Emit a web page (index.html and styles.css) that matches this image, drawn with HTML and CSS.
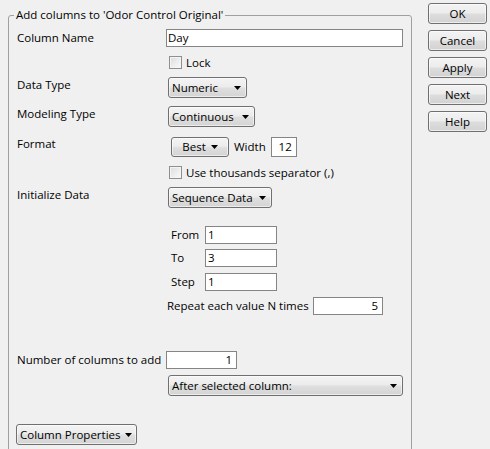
FILE: index.html
```html
<!DOCTYPE html>
<html>
<head>
<meta charset="utf-8">
<link rel="stylesheet" href="styles.css">
</head>
<body>
<div class="dialog">
  <fieldset class="group">
    <legend class="group-title">Add columns to 'Odor Control Original'</legend>

    <div class="row h18 r-name">
      <span class="lbl">Column Name</span>
      <span class="field w-name">Day</span>
    </div>

    <div class="row h13 r-lock">
      <span class="lbl"></span>
      <span class="check"></span><span class="check-text">Lock</span>
    </div>

    <div class="row h21 r-type">
      <span class="lbl up">Data Type</span>
      <span class="combo w-numeric"><span>Numeric</span><svg class="arrow" width="7" height="4" viewBox="0 0 7 4"><polygon points="0,0 7,0 3.5,4"/></svg></span>
    </div>

    <div class="row h21 r-model">
      <span class="lbl up">Modeling Type</span>
      <span class="combo w-cont"><span>Continuous</span><svg class="arrow" width="7" height="4" viewBox="0 0 7 4"><polygon points="0,0 7,0 3.5,4"/></svg></span>
    </div>

    <div class="row h20 r-format">
      <span class="lbl up">Format</span>
      <span class="menu-btn w-best"><span>Best</span><svg class="arrow" width="7" height="4" viewBox="0 0 7 4"><polygon points="0,0 7,0 3.5,4"/></svg></span>
      <span class="inline-lbl">Width</span>
      <span class="field right w-width">12</span>
    </div>

    <div class="row h13 r-sep">
      <span class="lbl"></span>
      <span class="check"></span><span class="check-text">Use thousands separator (,)</span>
    </div>

    <div class="row h21 r-init">
      <span class="lbl up">Initialize Data</span>
      <span class="combo w-seq"><span>Sequence Data</span><svg class="arrow" width="7" height="4" viewBox="0 0 7 4"><polygon points="0,0 7,0 3.5,4"/></svg></span>
    </div>

    <div class="seq">
      <div class="row h18 r-from">
        <span class="seq-lbl">From</span>
        <span class="field w-seqval">1</span>
      </div>
      <div class="row h18 r-to">
        <span class="seq-lbl">To</span>
        <span class="field w-seqval">3</span>
      </div>
      <div class="row h18 r-step">
        <span class="seq-lbl">Step</span>
        <span class="field w-seqval">1</span>
      </div>
      <div class="row h18 r-repeat">
        <span class="repeat-lbl">Repeat each value N times</span>
        <span class="field right w-repeat">5</span>
      </div>
    </div>

    <div class="row h18 r-count">
      <span class="lbl">Number of columns to add</span>
      <span class="field right w-count">1</span>
    </div>

    <div class="row h21 r-after">
      <span class="lbl"></span>
      <span class="combo w-after"><span>After selected column:</span><svg class="arrow" width="7" height="4" viewBox="0 0 7 4"><polygon points="0,0 7,0 3.5,4"/></svg></span>
    </div>

    <div class="row h21 r-props">
      <span class="menu-btn w-props"><span>Column Properties</span><svg class="arrow" width="7" height="4" viewBox="0 0 7 4"><polygon points="0,0 7,0 3.5,4"/></svg></span>
    </div>
  </fieldset>

  <div class="actions">
    <button class="btn">OK</button>
    <button class="btn">Cancel</button>
    <button class="btn">Apply</button>
    <button class="btn">Next</button>
    <button class="btn">Help</button>
  </div>
</div>
</body>
</html>
```

FILE: styles.css
```css
html, body {
  margin: 0;
  padding: 0;
  height: 100%;
  overflow: hidden;
  background: #f0f0f0;
}

body {
  font-family: "Open Sans", "Noto Sans", sans-serif;
  font-size: 11.5px;
  color: #000;
}

.dialog {
  display: flex;
  align-items: flex-start;
  padding-left: 8px;
  gap: 16px;
}

/* group box */
.group {
  box-sizing: border-box;
  width: 404px;
  margin: 7px 0 0 0;
  padding: 0 8px 12px 8px;
  border: 1px solid #a0a0a0;
  border-radius: 3px;
  min-inline-size: 0;
}

.group-title {
  padding: 0 2px;
  margin-left: -3px;
  line-height: 16px;
  height: 16px;
}

/* rows */
.row {
  display: flex;
  align-items: center;
  line-height: 14px;
  white-space: nowrap;
}
.h13 { height: 13px; }
.h18 { height: 18px; }
.h20 { height: 20px; }
.h21 { height: 21px; }

.r-name   { margin-top: 6px; }
.r-lock   { margin-top: 9px; }
.r-type   { margin-top: 8px; }
.r-model  { margin-top: 8px; }
.r-format { margin-top: 10px; }
.r-sep    { margin-top: 9px; }
.r-init   { margin-top: 8px; }
.r-from   { margin-top: 18px; }
.r-to     { margin-top: 5px; }
.r-step   { margin-top: 6px; }
.r-repeat { margin-top: 6px; }
.r-count  { margin-top: 36px; }
.r-after  { margin-top: 6px; }
.r-props  { margin-top: 28px; }

.lbl {
  flex: none;
  width: 149px;
}
.lbl.up { margin-bottom: 6px; }

/* text fields */
.field {
  box-sizing: border-box;
  display: flex;
  align-items: center;
  height: 18px;
  padding: 0 2px 0 1px;
  background: #fff;
  border: 1px solid #858585;
  color: #000;
}
.field.right {
  justify-content: flex-end;
  padding-right: 4px;
}
.w-name   { width: 238px; }
.w-width  { width: 26px; height: 20px; }
.w-seqval { width: 72px; padding-left: 2px; }
.w-repeat { width: 70px; }
.w-count  { width: 71px; padding-right: 6px; }

/* checkbox */
.check {
  box-sizing: border-box;
  flex: none;
  width: 13px;
  height: 13px;
  margin-left: 3px;
  border: 1px solid #8e8f8f;
  background: linear-gradient(135deg, #dcdcdc, #fbfbfb);
  box-shadow: inset 0 0 0 1px #f4f4f4;
}
.check-text {
  margin-left: 4px;
}

/* combo boxes and menu buttons */
.combo, .menu-btn {
  box-sizing: border-box;
  display: flex;
  align-items: center;
  height: 21px;
  border: 1px solid #707070;
  border-radius: 3px;
  background: linear-gradient(#f4f4f4 0%, #ececec 45%, #dedede 55%, #d4d4d4 100%);
  box-shadow: inset 0 0 0 1px rgba(255, 255, 255, 0.55);
}
.combo {
  justify-content: space-between;
  margin-left: 2px;
  padding: 0 5px 0 3px;
}
.arrow {
  flex: none;
  fill: #000;
}
.w-numeric { width: 79px; }
.w-cont    { width: 87px; }
.w-seq     { width: 104px; }
.w-after   { width: 238px; }

.menu-btn {
  gap: 5px;
}
.w-best {
  width: 58px;
  height: 20px;
  margin-left: 5px;
  justify-content: center;
}
.w-props {
  margin-left: -1px;
  padding: 0 4px 0 3px;
}

.inline-lbl {
  margin-left: 5px;
  margin-right: 5px;
}

/* sequence sub-block */
.seq {
  margin-left: 149px;
}
.seq-lbl {
  flex: none;
  width: 34px;
  padding-left: 5px;
}
.repeat-lbl {
  flex: none;
  width: 146px;
  padding-left: 1px;
}

/* right-hand buttons */
.actions {
  display: flex;
  flex-direction: column;
  gap: 6px;
  margin-top: 3px;
}
.btn {
  box-sizing: border-box;
  width: 59px;
  height: 21px;
  padding: 0;
  font: inherit;
  color: #000;
  border: 1px solid #707070;
  border-radius: 3px;
  background: linear-gradient(#f3f3f3 0%, #ececec 48%, #dddddd 52%, #d2d2d2 100%);
  box-shadow: inset 0 0 0 1px rgba(255, 255, 255, 0.6);
}
```
